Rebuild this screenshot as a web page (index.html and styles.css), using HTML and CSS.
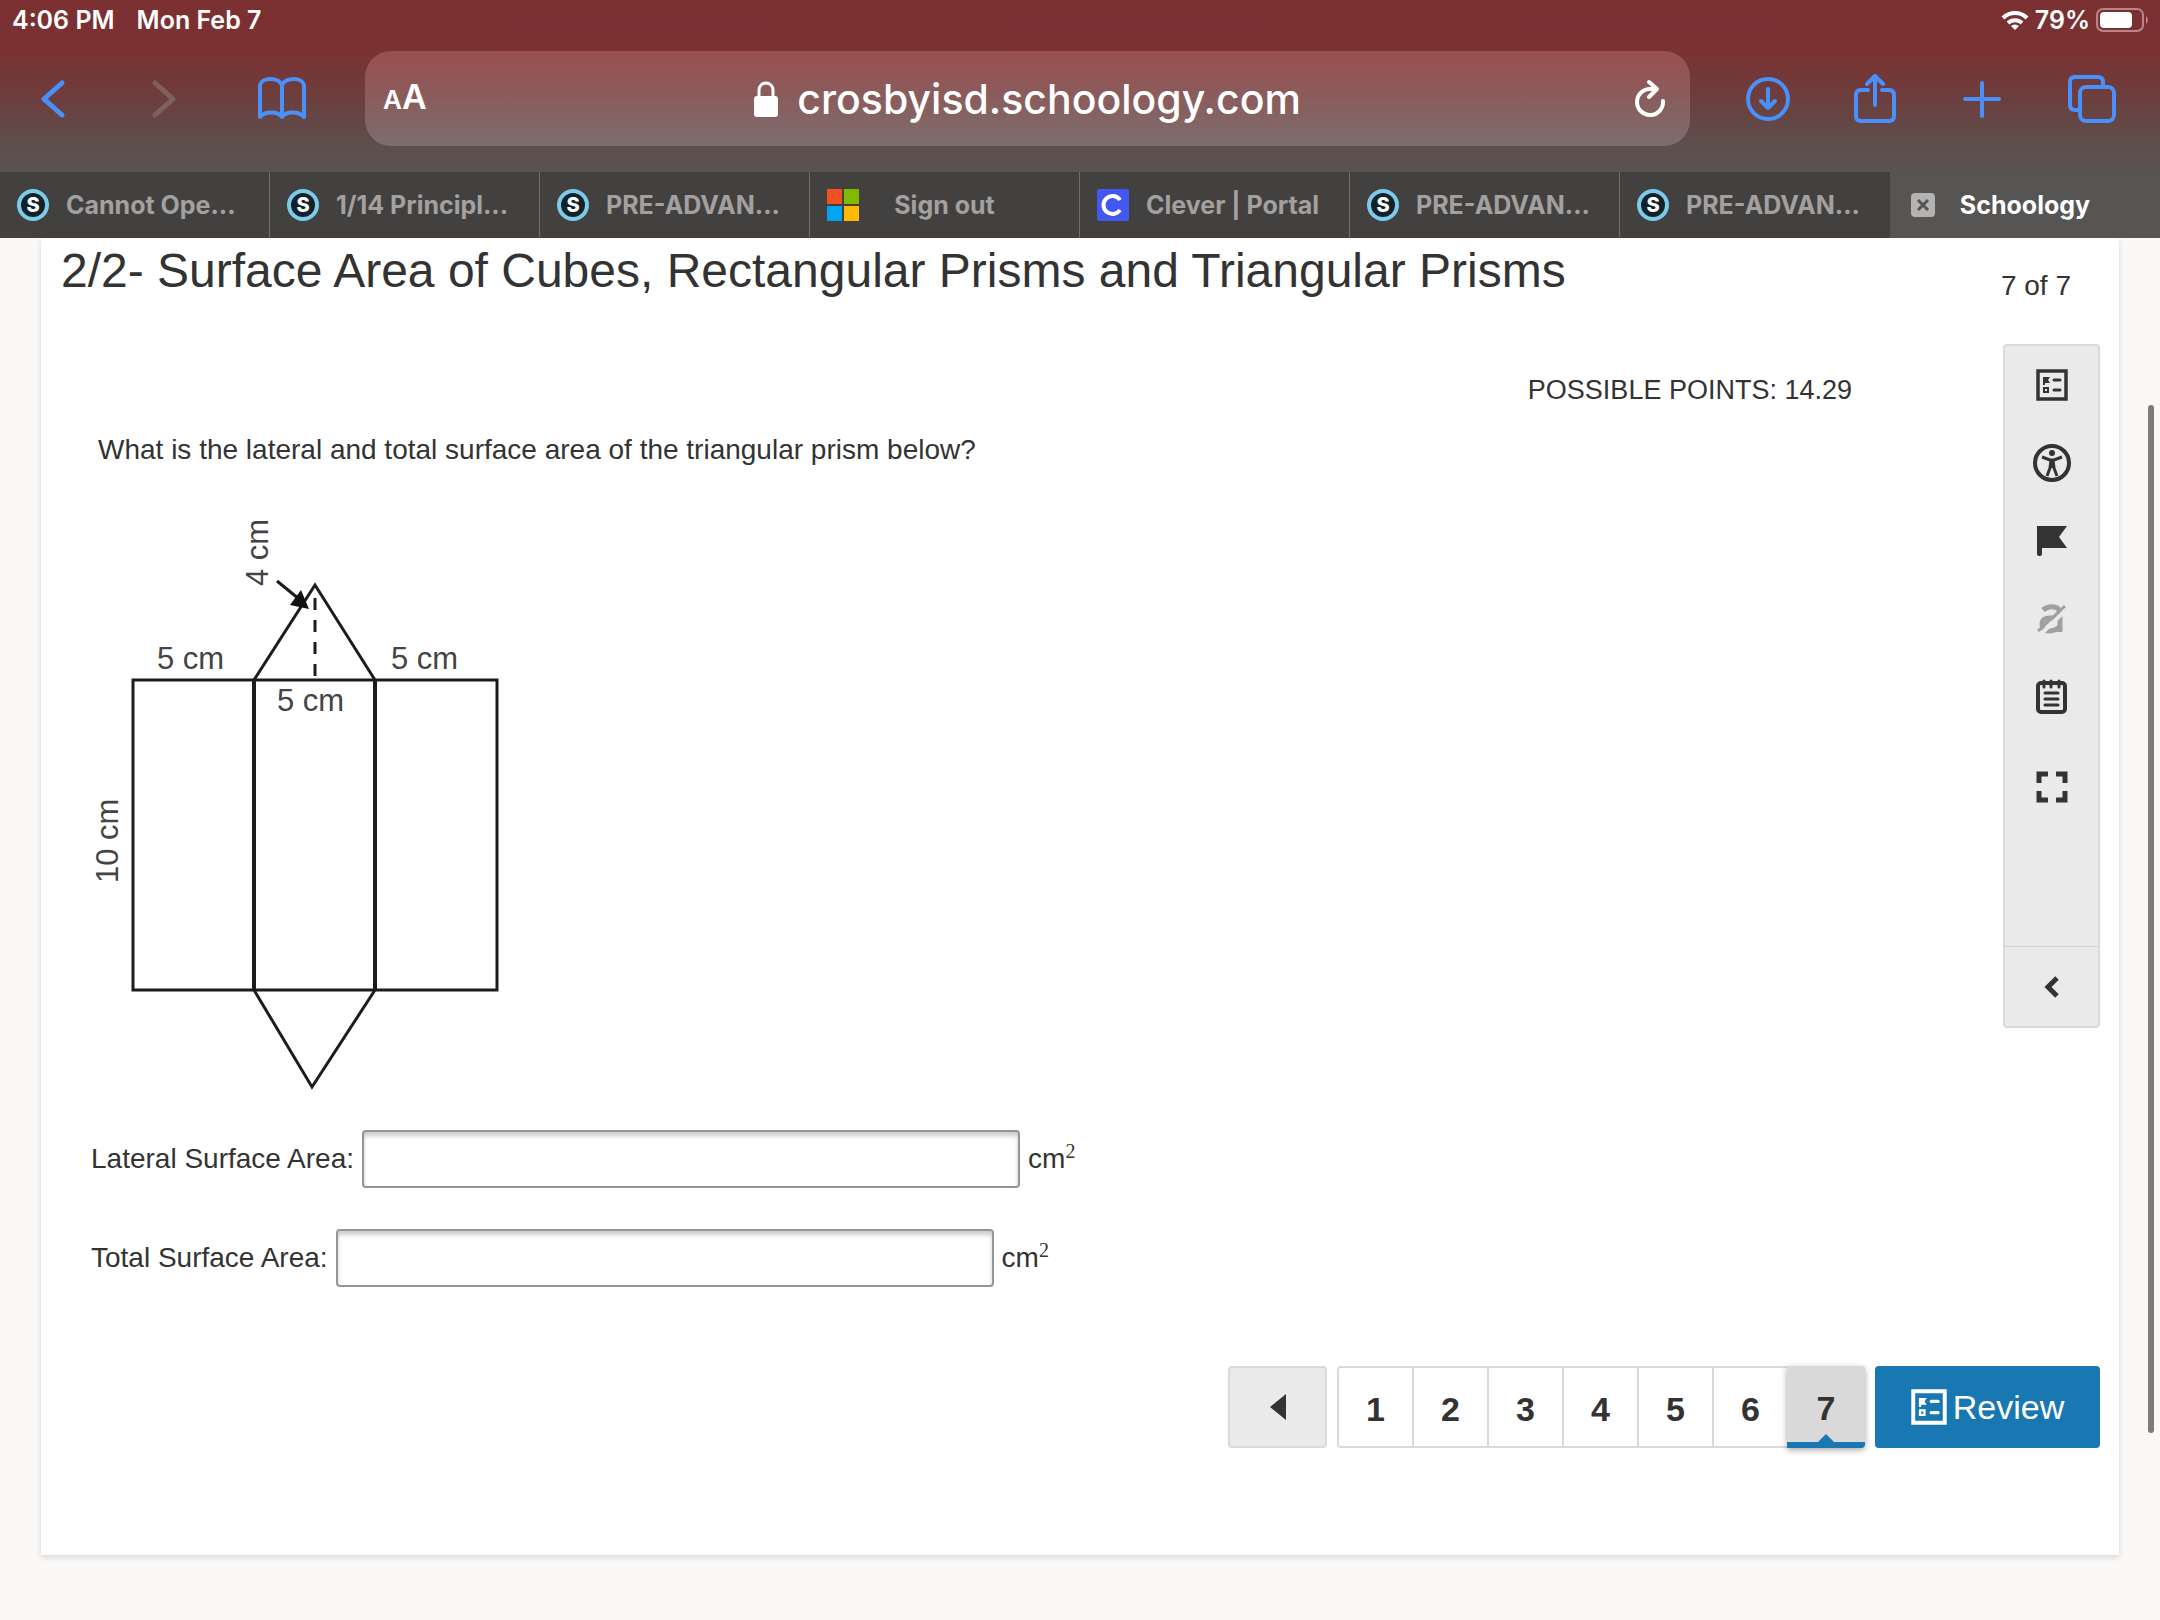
FILE: index.html
```html
<!DOCTYPE html>
<html lang="en">
<head>
    <meta charset="UTF-8">
    <meta name="viewport" content="width=device-width, initial-scale=1.0">
    <title>Schoology</title>
    <link rel="stylesheet" href="styles.css">
</head>
<body>
    <!-- shared shapes -->
    <svg class="defs" aria-hidden="true">
        <symbol id="icon-review" viewBox="0 0 32 32">
            <path d="M2 2h28v28H2z" fill="none" stroke="currentColor" stroke-width="3.5"/>
            <path d="M7 8h7l-2 3 2 3H9v2H7z" fill="currentColor"/>
            <path d="M8 19h4v4H8z" fill="none" stroke="currentColor" stroke-width="2"/>
            <path d="M18 11h6M18 21h6" stroke="currentColor" stroke-width="3" stroke-linecap="round"/>
        </symbol>
    </svg>

    <header class="browser">
        <div class="status">
            <span>4:06 PM</span>
            <span>Mon Feb 7</span>
            <div class="status-right">
                <svg class="wifi" viewBox="0 0 28 20">
                    <g fill="none" stroke="#fff" stroke-width="4">
                        <path d="M2 8a17 17 0 0 1 24 0"/>
                        <path d="M7 13a10 10 0 0 1 14 0"/>
                    </g>
                    <path d="M14 20l-4-4a6 6 0 0 1 8 0z" fill="#fff"/>
                </svg>
                <span>79%</span>
                <svg class="battery" viewBox="0 0 54 24">
                    <rect x="1" y="1" width="46" height="22" rx="6" fill="none" stroke="#b98586" stroke-width="2"/>
                    <rect x="4" y="4" width="32" height="16" rx="4" fill="#fff"/>
                    <path d="M50 8q4 4 0 8z" fill="#b98586"/>
                </svg>
            </div>
        </div>

        <div class="toolbar">
            <nav class="tools">
                <button class="arrow" aria-label="Back"><svg width="28" height="44" viewBox="0 0 28 44"><path d="M22 6L4 22l18 16"/></svg></button>
                <button class="arrow disabled" aria-label="Forward" disabled><svg width="28" height="44" viewBox="0 0 28 44"><path d="M6 6l18 16L6 38"/></svg></button>
                <button aria-label="Bookmarks"><svg width="48" height="44" viewBox="0 0 48 44"><path d="M24 8C20 0 4 0 2 8v32c5-6 18-6 22 0 4-6 17-6 22 0V8C44 0 28 0 24 8zv32"/></svg></button>
            </nav>
            <div class="address">
                <button class="text-size" aria-label="Page settings"><small>A</small>A</button>
                <div class="url">
                    <svg width="26" height="36" viewBox="0 0 26 36">
                        <rect x="1" y="15" width="24" height="21" rx="3" fill="#fff"/>
                        <path d="M6 17V9a7 7 0 0 1 14 0v8" fill="none" stroke="#fff" stroke-width="3"/>
                    </svg>
                    <input type="text" value="crosbyisd.schoology.com" aria-label="Address">
                </div>
                <button class="reload" aria-label="Reload">
                    <svg width="32" height="40" viewBox="0 0 32 40"><path d="M29 22A13 13 0 1 1 16 10h6M15 3l8 7-8 8"/></svg>
                </button>
            </div>
            <nav class="tools">
                <button aria-label="Downloads"><svg width="44" height="50" viewBox="0 0 44 50"><circle cx="22" cy="25" r="20"/><path d="M22 15v19M15 27l7 7 7-7"/></svg></button>
                <button aria-label="Share"><svg width="44" height="50" viewBox="0 0 44 50"><path d="M15 16H8q-5 0-5 5v21q0 5 5 5h28q5 0 5-5V21q0-5-5-5h-7M22 31V2M14 10l8-8 8 8"/></svg></button>
                <button aria-label="New tab"><svg width="44" height="50" viewBox="0 0 44 50"><path d="M22 9v33M5 25h34"/></svg></button>
                <button aria-label="Show tabs"><svg width="50" height="50" viewBox="0 0 50 50"><rect x="13" y="13" width="34" height="34" rx="6"/><path d="M12 36H8q-5 0-5-5V8q0-5 5-5h23q5 0 5 5v4"/></svg></button>
            </nav>
        </div>

        <nav class="tabs">
            <a class="tab" href="#"><b class="favicon badge">S</b><span>Cannot Ope...</span></a>
            <a class="tab" href="#"><b class="favicon badge">S</b><span>1/14 Principl...</span></a>
            <a class="tab" href="#"><b class="favicon badge">S</b><span>PRE-ADVAN...</span></a>
            <a class="tab short" href="#">
                <svg class="favicon" viewBox="0 0 32 32">
                    <path d="M0 0h15v15H0z" fill="#f25022"/><path d="M17 0h15v15H17z" fill="#7fba00"/>
                    <path d="M0 17h15v15H0z" fill="#00a4ef"/><path d="M17 17h15v15H17z" fill="#ffb900"/>
                </svg>
                <span>Sign out</span>
            </a>
            <a class="tab" href="#">
                <svg class="favicon" viewBox="0 0 32 32">
                    <rect width="32" height="32" rx="2" fill="#4358f0"/>
                    <path d="M23 11a9 9 0 1 0 0 10" fill="none" stroke="#fff" stroke-width="4"/>
                </svg>
                <span>Clever | Portal</span>
            </a>
            <a class="tab" href="#"><b class="favicon badge">S</b><span>PRE-ADVAN...</span></a>
            <a class="tab" href="#"><b class="favicon badge">S</b><span>PRE-ADVAN...</span></a>
            <a class="tab short active" href="#">
                <svg class="favicon" viewBox="0 0 32 32">
                    <rect x="4" y="4" width="24" height="24" rx="4" fill="#b4b3b2"/>
                    <path d="M11 11l10 10M21 11L11 21" stroke="#555" stroke-width="3"/>
                </svg>
                <span>Schoology</span>
            </a>
        </nav>
    </header>

    <main class="card">
        <div class="heading">
            <h1>2/2- Surface Area of Cubes, Rectangular Prisms and Triangular Prisms</h1>
            <span class="count">7 of 7</span>
        </div>

        <div class="body">
            <section class="question">
                <p class="points">POSSIBLE POINTS: 14.29</p>
                <p class="prompt">What is the lateral and total surface area of the triangular prism below?</p>

                <svg class="figure" width="420" height="590" viewBox="0 0 420 590">
                    <g fill="none" stroke="#1c1c1c" stroke-width="3">
                        <path d="M43 170h364v310H43z"/>
                        <path d="M164 170v310M285 170v310" stroke-width="4"/>
                        <path d="M164 170L225 75l60 95M164 480l58 97 63-97"/>
                        <path d="M225 88v82" stroke-dasharray="12 10"/>
                        <path d="M187 71l22 18"/>
                    </g>
                    <path d="M219 99l-19-4 11-15z" fill="#111"/>
                    <g class="labels">
                        <text x="67" y="159">5 cm</text>
                        <text x="301" y="159">5 cm</text>
                        <text x="187" y="201">5 cm</text>
                        <text transform="translate(178 76) rotate(-90)">4 cm</text>
                        <text transform="translate(28 373) rotate(-90)">10 cm</text>
                    </g>
                </svg>

                <div class="answer">
                    <label for="lateral">Lateral Surface Area:</label>
                    <input type="text" id="lateral">
                    <span>cm<sup>2</sup></span>
                </div>
                <div class="answer">
                    <label for="total">Total Surface Area:</label>
                    <input type="text" id="total">
                    <span>cm<sup>2</sup></span>
                </div>
            </section>

            <aside class="sidebar">
                <button aria-label="Review"><svg width="32" height="32"><use href="#icon-review"/></svg></button>
                <button aria-label="Accessibility">
                    <svg width="40" height="40" viewBox="0 0 40 40">
                        <circle cx="20" cy="20" r="17" fill="none" stroke="currentColor" stroke-width="4"/>
                        <circle cx="20" cy="10" r="3" fill="currentColor"/>
                        <path d="M10 14l8 3h4l8-3M20 17v8M19 17l-1 8-3 8M21 17l1 8 3 8" fill="none" stroke="currentColor" stroke-width="3"/>
                    </svg>
                </button>
                <button aria-label="Flag question">
                    <svg width="32" height="32" viewBox="0 0 32 32"><path d="M1 1h30l-8 11 8 11H6v6q0 2-2 2H3q-2 0-2-2z" fill="currentColor"/></svg>
                </button>
                <button class="disabled" aria-label="Answer masking" disabled>
                    <svg width="32" height="32" viewBox="0 0 32 32">
                        <path d="M7 7q5-4 11-3 6 1 6 7v18M24 15H14q-8 0-8 6 0 7 7 7 7 0 11-5" fill="none" stroke="currentColor" stroke-width="5"/>
                        <path d="M5 31L31 6" stroke="#eaeaea" stroke-width="4"/>
                        <path d="M2 28L29 3" stroke="currentColor" stroke-width="3"/>
                    </svg>
                </button>
                <button aria-label="Notepad">
                    <svg width="32" height="36" viewBox="0 0 32 36">
                        <rect x="2" y="4" width="27" height="29" rx="3" fill="none" stroke="currentColor" stroke-width="4"/>
                        <path d="M8 2v6M15 2v6M23 2v6M9 14h13M9 20h13M9 26h13" stroke="currentColor" stroke-width="3" stroke-linecap="round"/>
                    </svg>
                </button>
                <button class="expand" aria-label="Full screen">
                    <svg width="32" height="32" viewBox="0 0 32 32"><path d="M3 12V3h9M20 3h9v9M29 20v9h-9M12 29H3v-9" fill="none" stroke="currentColor" stroke-width="5"/></svg>
                </button>
                <button class="collapse" aria-label="Collapse toolbar">
                    <svg width="16" height="24" viewBox="0 0 16 24"><path d="M13 3L4 12l9 9" fill="none" stroke="currentColor" stroke-width="5"/></svg>
                </button>
            </aside>
        </div>

        <nav class="pager">
            <button class="prev" aria-label="Previous question"><svg width="16" height="26" viewBox="0 0 16 26"><path d="M16 0v26L0 13z" fill="currentColor"/></svg></button>
            <div class="pages">
                <a href="#">1</a>
                <a href="#">2</a>
                <a href="#">3</a>
                <a href="#">4</a>
                <a href="#">5</a>
                <a href="#">6</a>
                <a class="current" href="#">7</a>
            </div>
            <button class="review"><svg width="36" height="36"><use href="#icon-review"/></svg>Review</button>
        </nav>
    </main>

    <div class="scrollbar"></div>
</body>
</html>
```

FILE: styles.css
```css
* {
    box-sizing: border-box;
}

body {
    margin: 0;
    min-height: 100vh;
    position: relative;
    background: #faf9f7;
    color: #333;
    font-family: "Liberation Sans", Arial, sans-serif;
    font-size: 28px;
    line-height: 36px;
}

h1, p {
    margin: 0;
    font-weight: normal;
}

a {
    color: inherit;
    text-decoration: none;
}

button {
    display: flex;
    align-items: center;
    justify-content: center;
    padding: 0;
    border: 0;
    background: none;
    color: inherit;
    font: inherit;
}

svg {
    display: block;
    flex: none;
}

.defs {
    position: absolute;
    width: 0;
    height: 0;
}

/* browser chrome */
.browser {
    background: linear-gradient(#7b3032 0, #7a3233 55px, #6e3c3b 90px, #5c504e 150px, #565554 190px);
    color: #fff;
    font-family: Inter, sans-serif;
}

.status {
    display: flex;
    gap: 22px;
    height: 51px;
    padding: 2px 10px 0 12px;
    font-size: 25px;
    font-weight: 600;
}

.status-right {
    display: flex;
    align-items: center;
    gap: 6px;
    height: 36px;
    margin-left: auto;
}

.wifi {
    width: 28px;
    height: 20px;
}

.battery {
    width: 54px;
    height: 24px;
}

.toolbar {
    display: flex;
    align-items: center;
    gap: 56px;
    padding: 0 43px 26px 40px;
}

.tools {
    display: flex;
    align-items: center;
    gap: 81px;
    color: #4a90fb;
}

.tools:last-child {
    gap: 63px;
}

.tools svg,
.reload svg {
    fill: none;
    stroke: currentColor;
    stroke-width: 4;
    stroke-linecap: round;
    stroke-linejoin: round;
}

.tools .arrow svg {
    stroke-width: 5;
}

.tools .disabled {
    color: #80605e;
}

.address {
    display: flex;
    flex: 1;
    align-items: center;
    height: 95px;
    margin-left: 3px;
    padding: 0 24px 0 18px;
    border-radius: 26px;
    background: linear-gradient(#9b4f50, #8a5c5c 45px, #7d6d6d);
}

.text-size {
    align-items: baseline;
    font-size: 34px;
    font-weight: 600;
}

.text-size small {
    font-size: 26px;
}

.url {
    display: flex;
    flex: 1;
    align-items: center;
    justify-content: center;
    gap: 18px;
}

.url input {
    width: 510px;
    padding: 0;
    border: 0;
    outline: 0;
    background: none;
    color: inherit;
    font: 500 41px Inter, sans-serif;
}

.tabs {
    display: grid;
    grid-template-columns: repeat(8, 1fr);
}

.tab {
    display: flex;
    align-items: center;
    gap: 17px;
    height: 66px;
    padding: 0 17px;
    border-right: 1px solid #706e6d;
    background: #434040;
    color: #a3a1a0;
    font-size: 25px;
    font-weight: 700;
    white-space: nowrap;
}

.tab.short span {
    flex: 1;
    padding-right: 49px;
    text-align: center;
}

.tab:nth-child(7) {
    border-right: 0;
}

.tab.active {
    border-right: 0;
    background: #565554;
    color: #fff;
}

.favicon {
    width: 32px;
    height: 32px;
}

.badge {
    border: 4px solid #7ccbe8;
    border-radius: 50%;
    background: #12222a;
    color: #fff;
    font-size: 20px;
    font-weight: 800;
    line-height: 24px;
    text-align: center;
}

/* assessment */
.card {
    margin: 0 41px;
    padding: 0 19px 107px 20px;
    background: #fff;
    box-shadow: 0 2px 6px rgba(0, 0, 0, 0.15);
}

.heading {
    display: flex;
    justify-content: space-between;
    align-items: flex-end;
    height: 66px;
    padding-right: 29px;
    margin-bottom: 40px;
}

h1 {
    font-size: 48px;
    line-height: 66px;
}

.body {
    display: flex;
    align-items: flex-start;
    gap: 151px;
}

.question {
    flex: 1;
    padding-top: 28px;
}

.points {
    font-size: 27px;
    text-align: right;
}

.prompt {
    margin: 24px 0 42px 37px;
}

.figure {
    margin-left: 29px;
}

.labels {
    fill: #444;
    font-size: 31px;
}

.answer {
    display: flex;
    align-items: center;
    gap: 8px;
    margin: 30px 0 0 30px;
}

.answer + .answer {
    margin-top: 41px;
}

.answer input {
    width: 658px;
    height: 58px;
    padding: 0 12px;
    border: 2px solid #949695;
    border-radius: 4px;
    box-shadow: inset 0 4px 4px rgba(0, 0, 0, 0.2);
    font: inherit;
}

.answer sup {
    font-family: "Liberation Serif", serif;
    font-size: 20px;
    line-height: 0;
}

.sidebar {
    display: flex;
    flex-direction: column;
    width: 97px;
    height: 684px;
    border: 2px solid #dadada;
    border-radius: 4px;
    background: #eaeaea;
}

.sidebar button {
    height: 78px;
}

.sidebar .expand {
    height: 102px;
}

.sidebar .disabled {
    color: #a0a0a0;
}

.sidebar .collapse {
    height: 80px;
    margin-top: auto;
    border-top: 1px solid #d2d2d2;
}

.pager {
    display: flex;
    justify-content: flex-end;
    gap: 10px;
    height: 82px;
    margin-top: 79px;
}

.prev {
    width: 99px;
    border: 2px solid #dadada;
    border-radius: 4px;
    background: #eaeaea;
}

.pages {
    display: flex;
    border: 2px solid #dadada;
    border-radius: 4px;
    font-size: 34px;
    font-weight: bold;
}

.pages a {
    display: flex;
    align-items: center;
    justify-content: center;
    width: 75px;
    padding-top: 4px;
    border-right: 2px solid #dadada;
}

.pages .current {
    position: relative;
    width: 78px;
    margin: -2px;
    padding-top: 8px;
    border-right: 0;
    border-bottom: 6px solid #1977b1;
    border-radius: 0 4px 4px 0;
    background: #d9d9d9;
    box-shadow: 0 2px 6px rgba(0, 0, 0, 0.35);
}

/* pointer above the blue underline */
.pages .current::after {
    content: "";
    position: absolute;
    bottom: 0;
    border: 8px solid transparent;
    border-top: 0;
    border-bottom-color: #1977b1;
}

.review {
    gap: 6px;
    width: 225px;
    border-radius: 4px;
    background: #1977b1;
    color: #fff;
    font-size: 34px;
}

.scrollbar {
    position: absolute;
    top: 25%;
    right: 6px;
    width: 6px;
    height: 1028px;
    border-radius: 3px;
    background: #7d7c7b;
}
```
